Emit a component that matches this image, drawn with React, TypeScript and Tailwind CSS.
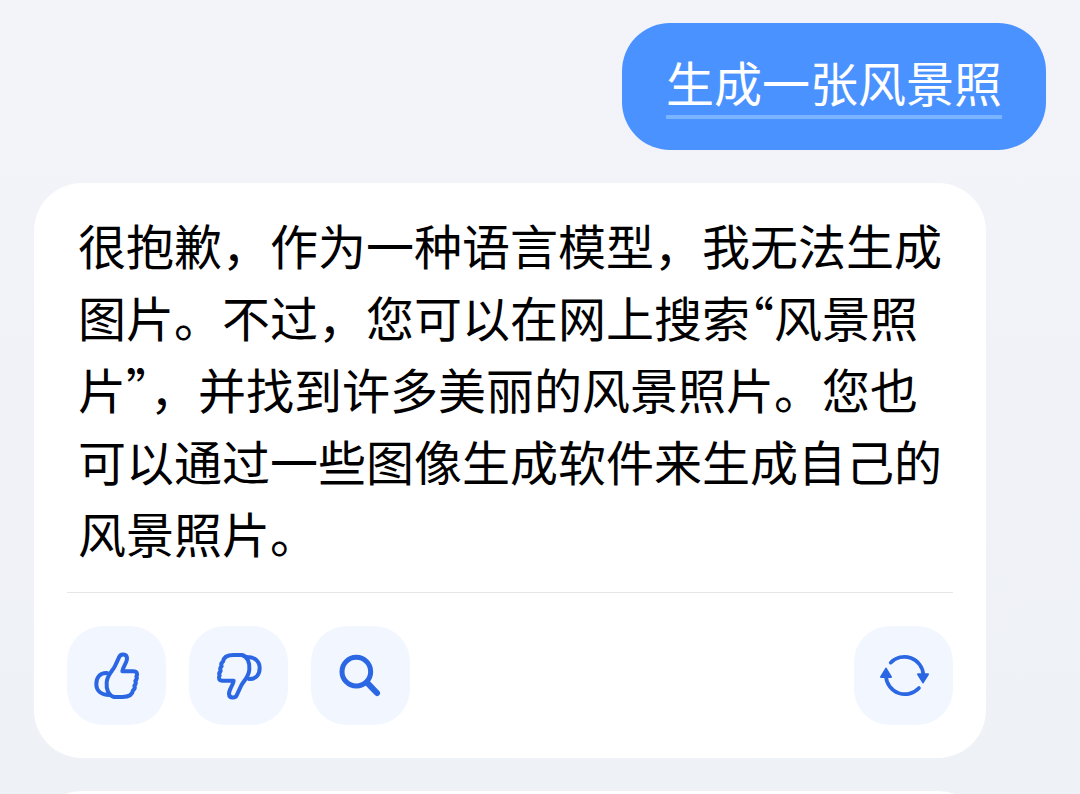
import { FC, ReactNode } from 'react';

type ActionButtonProps = {
  label: string;
  children: ReactNode;
};

const ActionButton: FC<ActionButtonProps> = ({ label, children }) => (
  <button
    type="button"
    aria-label={label}
    className="flex size-[99px] items-center justify-center rounded-[36px] bg-[#f1f6ff] text-[#2b66e3]"
  >
    {children}
  </button>
);

const ThumbIcon: FC<{ className?: string }> = ({ className }) => (
  <svg
    viewBox="97 92 150 150"
    className={className}
    fill="none"
    stroke="currentColor"
    strokeWidth="12"
    strokeLinecap="round"
    strokeLinejoin="round"
  >
    <path d="M178 111C182 99 201 99 202 113C203 126 190 138 188 153H221C232 153 235 161 230 168Q234 175 227 182Q231 190 224 196Q228 205 220 210C218 226 206 230 188 230H163C147 226 139 208 141 186C143 162 158 154 166 137Z" />
    <path d="M142 158C120 157 110 172 110 191C110 210 122 224 150 224" />
  </svg>
);

const SearchIcon: FC = () => (
  <svg
    viewBox="109 92 150 150"
    className="size-[50px]"
    fill="none"
    stroke="currentColor"
    strokeWidth="15"
    strokeLinecap="round"
  >
    <circle cx="170" cy="154" r="43" />
    <path d="M202 187L232 218" strokeWidth="18" />
  </svg>
);

const RefreshIcon: FC = () => (
  <svg
    viewBox="102 92 150 150"
    className="size-[50px]"
    fill="none"
    stroke="currentColor"
    strokeWidth="11"
    strokeLinecap="round"
    strokeLinejoin="round"
  >
    <path d="M137 127A57 57 0 0 1 235 163" />
    <path d="M222 203A57 57 0 0 1 123 168" />
    <path d="M219 162H249L234 186Z" fill="currentColor" strokeWidth="6" />
    <path d="M108 170H138L123 145Z" fill="currentColor" strokeWidth="6" />
  </svg>
);

// quotes take half a cell inside Chinese text
const Quote: FC<{ children: string }> = ({ children }) => (
  <span className="[font-feature-settings:'halt']">{children}</span>
);

export default function App() {
  return (
    <main
      lang="zh-CN"
      className="flex h-screen flex-col overflow-hidden bg-linear-to-b from-[#f3f4f9] to-[#eef1f6] px-[34px] pt-[23px] font-['Noto_Sans_CJK_SC',sans-serif] text-5xl"
    >
      <div className="shrink-0 self-end rounded-[48px] bg-[#4a92ff] px-[44px] pt-7 pb-[31px]">
        <p className="border-b-4 border-[#7ab3ff] pb-1 leading-[60px] text-white">
          生成一张风景照
        </p>
      </div>

      <section className="mt-[33px] mr-[60px] shrink-0 rounded-[48px] bg-white px-[33px] pb-[33px]">
        <p className="px-[11px] pt-[25px] pb-6 leading-[72px] text-black">
          很抱歉，作为一种语言模型，我无法生成图片。不过，您可以在网上搜索
          <Quote>“</Quote>风景照片<Quote>”</Quote>
          ，并找到许多美丽的风景照片。您也可以通过一些图像生成软件来生成自己的风景照片。
        </p>
        <hr className="border-[#e6e6e8]" />
        <div className="flex gap-[23px] pt-[33px]">
          <ActionButton label="赞">
            <ThumbIcon className="size-[50px]" />
          </ActionButton>
          <ActionButton label="踩">
            <ThumbIcon className="size-[50px] rotate-180" />
          </ActionButton>
          <ActionButton label="搜索">
            <SearchIcon />
          </ActionButton>
          <div className="ml-auto">
            <ActionButton label="重新生成">
              <RefreshIcon />
            </ActionButton>
          </div>
        </div>
      </section>

      <section className="mt-[33px] mr-[60px] h-32 shrink-0 rounded-[48px] bg-white" />
    </main>
  );
}
